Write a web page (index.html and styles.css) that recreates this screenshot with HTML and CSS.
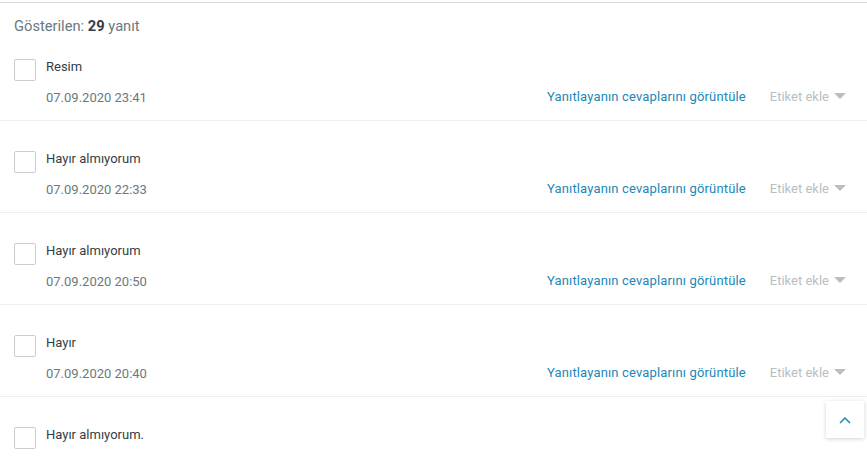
FILE: index.html
```html
<!DOCTYPE html>
<html lang="tr">
<head>
    <meta charset="UTF-8">
    <meta name="viewport" content="width=device-width, initial-scale=1.0">
    <title>Yanıtlar</title>
    <link rel="stylesheet" href="styles.css">
</head>
<body>
    <div class="page">
        <div class="summary">Gösterilen: <b>29</b> yanıt</div>

        <div class="response-list">
            <div class="response-row">
                <div class="row-top">
                    <span class="checkbox"></span>
                    <span class="answer">Resim</span>
                </div>
                <div class="row-meta">
                    <span class="date">07.09.2020 23:41</span>
                    <span class="actions">
                        <a class="view-link">Yanıtlayanın cevaplarını görüntüle</a>
                        <span class="tag">Etiket ekle <span class="caret"></span></span>
                    </span>
                </div>
            </div>

            <div class="response-row">
                <div class="row-top">
                    <span class="checkbox"></span>
                    <span class="answer">Hayır almıyorum</span>
                </div>
                <div class="row-meta">
                    <span class="date">07.09.2020 22:33</span>
                    <span class="actions">
                        <a class="view-link">Yanıtlayanın cevaplarını görüntüle</a>
                        <span class="tag">Etiket ekle <span class="caret"></span></span>
                    </span>
                </div>
            </div>

            <div class="response-row">
                <div class="row-top">
                    <span class="checkbox"></span>
                    <span class="answer">Hayır almıyorum</span>
                </div>
                <div class="row-meta">
                    <span class="date">07.09.2020 20:50</span>
                    <span class="actions">
                        <a class="view-link">Yanıtlayanın cevaplarını görüntüle</a>
                        <span class="tag">Etiket ekle <span class="caret"></span></span>
                    </span>
                </div>
            </div>

            <div class="response-row">
                <div class="row-top">
                    <span class="checkbox"></span>
                    <span class="answer">Hayır</span>
                </div>
                <div class="row-meta">
                    <span class="date">07.09.2020 20:40</span>
                    <span class="actions">
                        <a class="view-link">Yanıtlayanın cevaplarını görüntüle</a>
                        <span class="tag">Etiket ekle <span class="caret"></span></span>
                    </span>
                </div>
            </div>

            <!-- last row is only partly in view -->
            <div class="response-row">
                <div class="row-top">
                    <span class="checkbox"></span>
                    <span class="answer">Hayır almıyorum.</span>
                </div>
            </div>
        </div>
    </div>

    <!-- back to top -->
    <button class="to-top" aria-label="Yukarı">
        <svg width="12" height="8" viewBox="0 0 12 8"><path d="M1 7 L6 2 L11 7" fill="none" stroke="#1b87b8" stroke-width="1.5"/></svg>
    </button>
</body>
</html>
```

FILE: styles.css
```css
body {
    margin: 0;
    font-family: Roboto, "Liberation Sans", sans-serif;
    background: #fff;
    color: #333e48;
    overflow: hidden;
}
.page {
    margin-top: 2px;
    border-top: 1px solid #d5d8da;
}
.summary {
    padding: 14px 14px 0;
    font-size: 14.7px;
    line-height: 18px;
    color: #6b787f;
}
.summary b {
    color: #333e48;
    font-weight: bold;
}
.response-row {
    padding: 29px 21px 13px 14px;
    border-bottom: 1px solid #edeeee;
}
.response-row:first-child {
    padding-top: 23px;
}
.response-row:last-child {
    border-bottom: none;
}
.row-top {
    display: flex;
    align-items: flex-start;
}
.checkbox {
    width: 20px;
    height: 20px;
    margin-top: 1px;
    border: 1px solid #c8cdd0;
    border-radius: 2px;
    flex-shrink: 0;
}
.answer {
    margin-left: 10px;
    font-size: 13px;
    line-height: 18px;
}
.row-meta {
    display: flex;
    justify-content: space-between;
    align-items: center;
    margin-top: 8px;
    padding-left: 32px;
}
.date {
    font-size: 13px;
    line-height: 18px;
    color: #6b787f;
}
.actions {
    display: flex;
    align-items: center;
    gap: 24px;
    margin-top: -4px;
    font-size: 13px;
}
.view-link {
    color: #1b87b8;
    cursor: pointer;
    letter-spacing: 0.15px;
}
.tag {
    color: #b8bec2;
    display: flex;
    align-items: center;
}
.caret {
    display: inline-block;
    margin-left: 5px;
    width: 0;
    height: 0;
    border-left: 6px solid transparent;
    border-right: 6px solid transparent;
    border-top: 6px solid #b8bec2;
}
.to-top {
    position: fixed;
    right: 3px;
    bottom: 27px;
    width: 38px;
    height: 37px;
    background: #fff;
    border: none;
    box-shadow: 0 1px 4px rgba(0,0,0,0.18);
    display: flex;
    align-items: center;
    justify-content: center;
    padding: 0;
    cursor: pointer;
}
```
